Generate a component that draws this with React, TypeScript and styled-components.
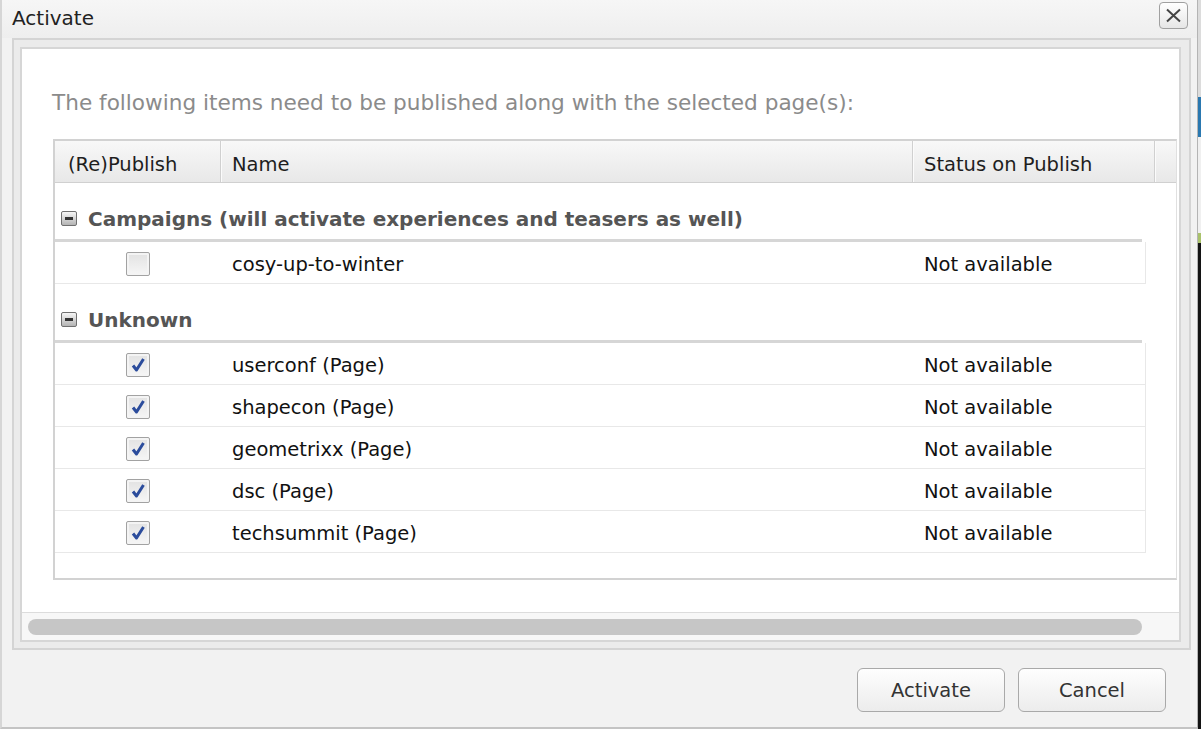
import React from "react";
import styled, { createGlobalStyle } from "styled-components";

type Item = { name: string; checked: boolean; status: string };
type Group = { title: string; items: Item[] };

const groups: Group[] = [
  {
    title: "Campaigns (will activate experiences and teasers as well)",
    items: [{ name: "cosy-up-to-winter", checked: false, status: "Not available" }],
  },
  {
    title: "Unknown",
    items: [
      { name: "userconf (Page)", checked: true, status: "Not available" },
      { name: "shapecon (Page)", checked: true, status: "Not available" },
      { name: "geometrixx (Page)", checked: true, status: "Not available" },
      { name: "dsc (Page)", checked: true, status: "Not available" },
      { name: "techsummit (Page)", checked: true, status: "Not available" },
    ],
  },
];

const GlobalStyle = createGlobalStyle`
  html, body {
    margin: 0;
    padding: 0;
  }
  body {
    width: 1201px;
    height: 729px;
    overflow: hidden;
    font-family: "DejaVu Sans", Verdana, sans-serif;
    background: linear-gradient(
      to bottom,
      #dcdcdc 0 97px,
      #2a78b0 97px 137px,
      #f0f0f0 137px 233px,
      #a9c26b 233px 243px,
      #141414 243px
    );
  }
`;

export default function App() {
  return (
    <>
      <GlobalStyle />
      <Dialog>
        <TitleBar>
          <Title>Activate</Title>
          <CloseButton aria-label="Close">
            <svg width="17" height="15" viewBox="0 0 17 15">
              <path d="M2 1.5 L15 13.5 M15 1.5 L2 13.5" stroke="#444" strokeWidth="2" fill="none" />
            </svg>
          </CloseButton>
        </TitleBar>

        <Frame>
          <Panel>
            <Content>
              <Intro>The following items need to be published along with the selected page(s):</Intro>
              <Grid>
                <GridHeader>
                  <HeaderCell $pad={13}>(Re)Publish</HeaderCell>
                  <HeaderCell $pad={11}>Name</HeaderCell>
                  <HeaderCell $pad={11}>Status on Publish</HeaderCell>
                  <HeaderCell $pad={0} />
                </GridHeader>
                <GridBody>
                  {groups.map((group) => (
                    <section key={group.title}>
                      <GroupHeader>
                        <CollapseIcon />
                        {group.title}
                      </GroupHeader>
                      <GroupLine />
                      {group.items.map((item) => (
                        <Row key={item.name}>
                          <CheckCell>
                            <Checkbox>
                              {item.checked && (
                                <svg width="18" height="18" viewBox="0 0 18 18">
                                  <path
                                    d="M4 9.5 L7.5 14 L14.5 3"
                                    stroke="#2b4c9c"
                                    strokeWidth="3"
                                    strokeLinejoin="round"
                                    fill="none"
                                  />
                                </svg>
                              )}
                            </Checkbox>
                          </CheckCell>
                          <TextCell>{item.name}</TextCell>
                          <TextCell>{item.status}</TextCell>
                        </Row>
                      ))}
                    </section>
                  ))}
                </GridBody>
              </Grid>
            </Content>
            <ScrollTrack>
              <ScrollThumb />
            </ScrollTrack>
          </Panel>
        </Frame>

        <Footer>
          <Button>Activate</Button>
          <Button>Cancel</Button>
        </Footer>
      </Dialog>
    </>
  );
}

const Dialog = styled.div`
  width: 1198px;
  height: 729px;
  box-sizing: border-box;
  display: flex;
  flex-direction: column;
  background: #f2f2f2;
  border-left: 2px solid #d6d6d6;
  border-right: 1px solid #b4b4b4;
  border-bottom: 2px solid #c4c4c4;
`;

const TitleBar = styled.div`
  height: 38px;
  box-sizing: border-box;
  display: flex;
  align-items: flex-start;
  justify-content: space-between;
  padding: 2px 9px 0 10px;
  background: linear-gradient(#f6f6f6, #eeeeee);
`;

const Title = styled.span`
  margin-top: 3px;
  font-size: 20px;
  line-height: 26px;
  color: #222;
`;

const CloseButton = styled.button`
  width: 29px;
  height: 27px;
  padding: 0;
  display: flex;
  align-items: center;
  justify-content: center;
  border: 1px solid #a0a0a0;
  border-radius: 4px;
  background: linear-gradient(#ffffff, #e6e6e6);
`;

const Frame = styled.div`
  height: 612px;
  box-sizing: border-box;
  margin: 0 6px 0 10px;
  display: flex;
  border: 2px solid #d4d4d4;
  background: #ebebeb;
  padding: 7px 8px 6px 6px;
`;

const Panel = styled.div`
  flex: 1;
  min-width: 0;
  display: flex;
  flex-direction: column;
  background: #fff;
  border: 2px solid #d6d6d6;
  overflow: hidden;
`;

const Content = styled.div`
  height: 563px;
  box-sizing: border-box;
  padding: 41px 0 0 30px;
  overflow: hidden;
`;

const Intro = styled.p`
  margin: 0 0 23px;
  font-size: 21.6px;
  line-height: 26px;
  color: #8b8b8b;
  white-space: nowrap;
`;

const Grid = styled.div`
  width: 1124px;
  margin-left: 1px;
  box-sizing: border-box;
  border: 2px solid #d2d2d2;
  border-right: 1px solid #e0e0e0;
`;

const GridHeader = styled.div`
  height: 42px;
  box-sizing: border-box;
  display: grid;
  grid-template-columns: 166px 692px 242px 1fr;
  background: linear-gradient(#f8f8f8, #e8e8e8);
  border-bottom: 1px solid #d0d0d0;
`;

const HeaderCell = styled.div<{ $pad: number }>`
  display: flex;
  align-items: center;
  padding: 5px 0 0 ${({ $pad }) => $pad}px;
  border-right: 1px solid #d0d0d0;
  box-shadow: 1px 0 0 #fbfbfb;
  font-size: 19.5px;
  color: #1e1e1e;
  white-space: nowrap;

  &:last-child {
    border-right: none;
    box-shadow: none;
  }
`;

const GridBody = styled.div`
  height: 395px;
  background: #fff;
`;

const GroupHeader = styled.div`
  display: flex;
  align-items: center;
  gap: 11px;
  padding: 24px 0 8px 6px;
  font-size: 20px;
  line-height: 24px;
  font-weight: bold;
  color: #555;
  white-space: nowrap;
`;

const CollapseIcon = styled.span`
  position: relative;
  width: 16px;
  height: 15px;
  margin-top: -1px;
  box-sizing: border-box;
  border: 1px solid #707070;
  border-radius: 2px;
  background: linear-gradient(#f6f6f6, #b4b4b4);

  &::after {
    content: "";
    position: absolute;
    left: 3px;
    right: 3px;
    top: 5px;
    height: 3px;
    background: #333;
  }
`;

const GroupLine = styled.div`
  width: 1087px;
  height: 3px;
  background: #d6d6d6;
`;

const Row = styled.div`
  width: 1091px;
  height: 42px;
  box-sizing: border-box;
  display: grid;
  grid-template-columns: 166px 692px 1fr;
  align-items: center;
  border-bottom: 1px solid #e8e8e8;
  border-right: 1px solid #e8e8e8;
`;

const CheckCell = styled.div`
  display: flex;
  justify-content: center;
  padding-top: 3px;
`;

const Checkbox = styled.span`
  width: 24px;
  height: 24px;
  box-sizing: border-box;
  display: flex;
  align-items: center;
  justify-content: center;
  border: 1px solid #a2a2a2;
  border-radius: 2px;
  background: linear-gradient(#e2e2e2, #f6f6f6);
  box-shadow: inset 0 0 0 2px #f4f4f4;
`;

const TextCell = styled.div`
  padding: 4px 0 0 11px;
  font-size: 19.5px;
  color: #111;
  white-space: nowrap;
`;

const ScrollTrack = styled.div`
  height: 28px;
  box-sizing: border-box;
  padding: 6px 0 0 6px;
  border-top: 1px solid #dcdcdc;
  background: #f7f7f7;
`;

const ScrollThumb = styled.div`
  width: 1114px;
  height: 16px;
  border-radius: 8px;
  background: #c6c6c6;
`;

const Footer = styled.div`
  flex: 1;
  display: flex;
  justify-content: flex-end;
  align-items: flex-start;
  gap: 13px;
  padding: 18px 31px 0 0;
`;

const Button = styled.button`
  width: 148px;
  height: 44px;
  box-sizing: border-box;
  border: 1px solid #a9a9a9;
  border-radius: 6px;
  background: linear-gradient(#fefefe, #ececec);
  font-family: inherit;
  font-size: 19.5px;
  color: #333;
`;
